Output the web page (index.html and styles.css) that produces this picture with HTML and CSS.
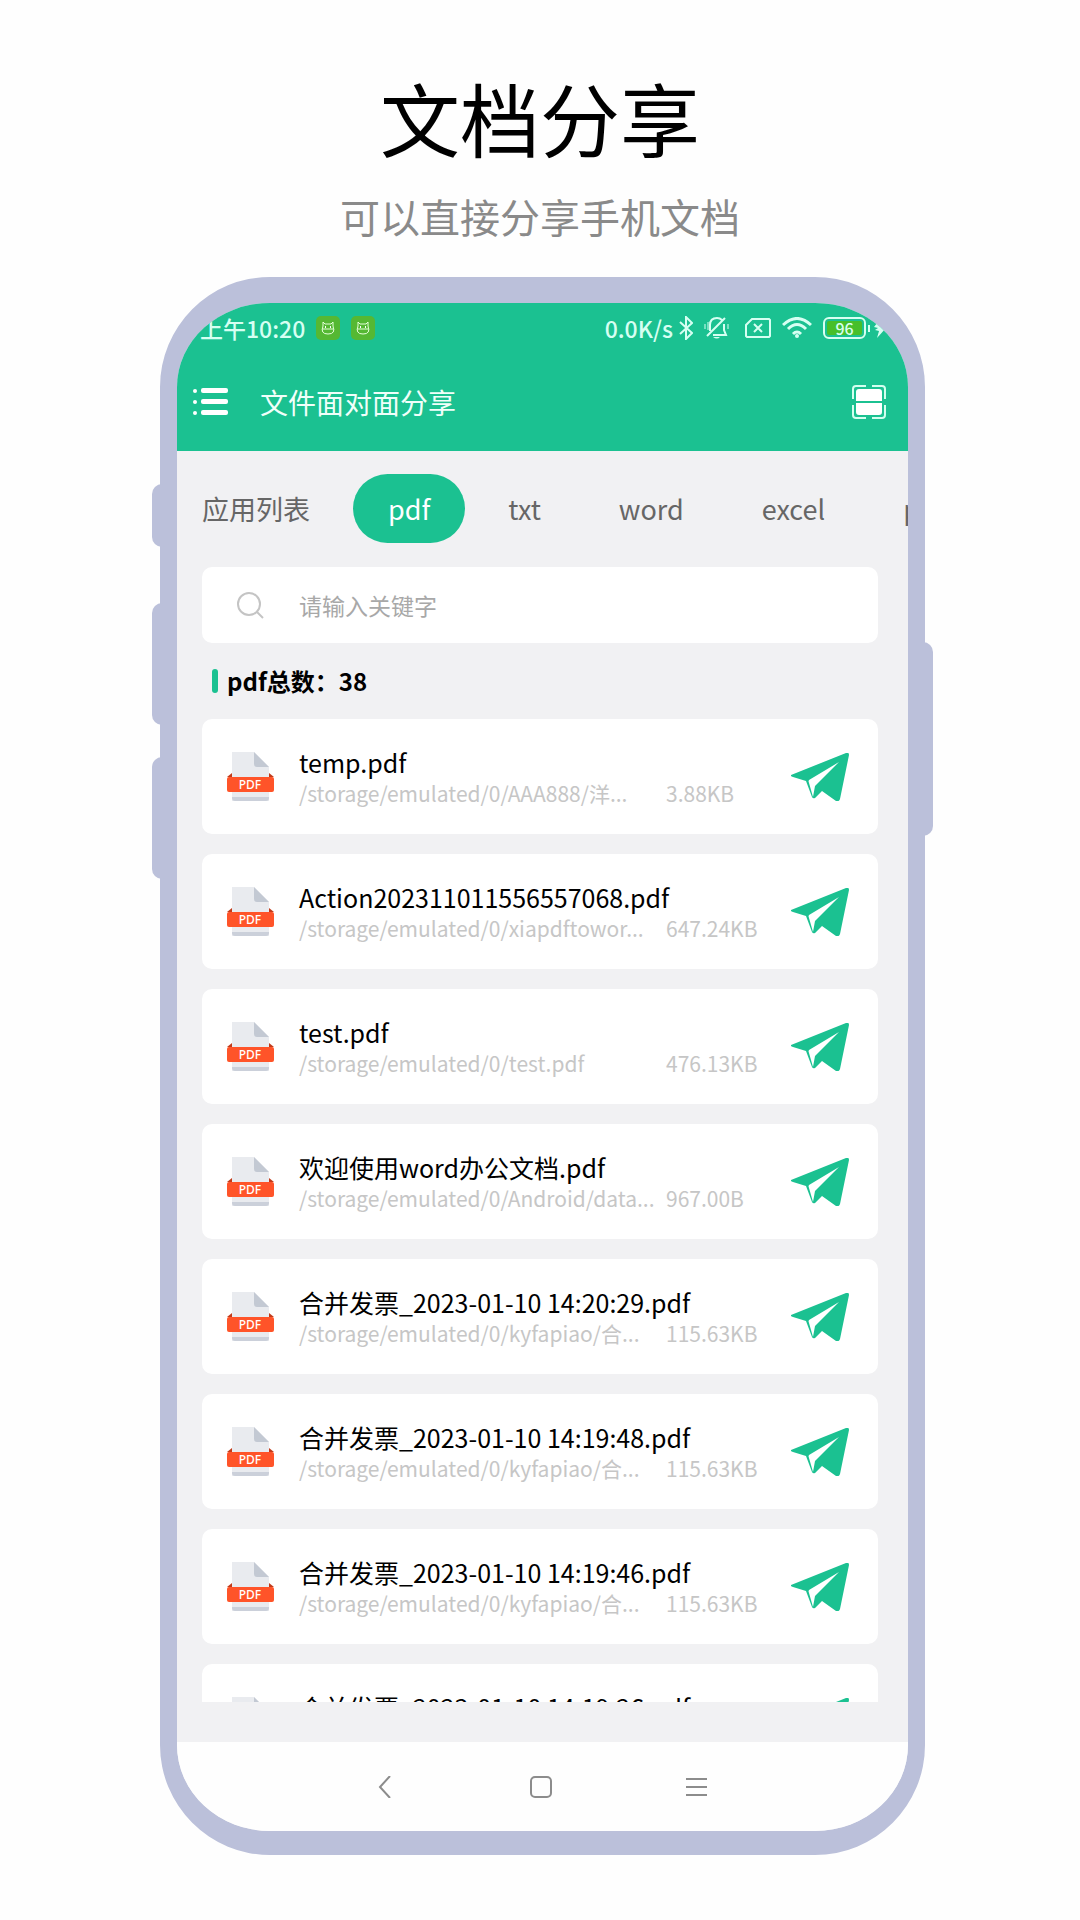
FILE: index.html
```html
<!DOCTYPE html>
<html lang="zh-CN">

<head>
    <meta charset="UTF-8">
    <meta name="viewport" content="width=device-width, initial-scale=1.0">
    <title>文档分享</title>
    <link rel="stylesheet" href="styles.css">
</head>

<body>
    <!-- shared icons -->
    <svg class="sprite" aria-hidden="true">
        <symbol id="pdf" viewBox="0 0 47 49">
            <path d="M5 0h22l15 15v34H5z" fill="#e9ebef" />
            <path d="M27 0l15 15H30q-3 0-3-3z" fill="#c3c9d3" />
            <path d="M5 40h37v6q0 3-3 3H8q-3 0-3-3z" fill="#e9ebef" />
            <path d="M5 45h37v1q0 3-3 3H8q-3 0-3-3z" fill="#cbd0da" />
            <path d="M0 25l5-4v4zM47 25l-5-4v4z" fill="#c23b1a" />
            <rect y="25" width="47" height="15" rx="2" fill="#ff5429" />
            <text class="pdf-text" x="23" y="37" text-anchor="middle">PDF</text>
        </symbol>
        <symbol id="plane" viewBox="0 0 58 48">
            <path d="M0 22L55 0q3-1 3 2l-9 44q-1 3-4 2L31 38l-7 7q-2 1-3-1L15 28 2 24q-3-1-2-2z" fill="#1bc191" />
            <path d="M48 9L18 27q-1 1 0 3l4 14 2-11z" fill="#fff" />
        </symbol>
        <symbol id="cat" viewBox="0 0 24 24">
            <rect width="24" height="24" rx="5" fill="#55b833" />
            <g fill="none" stroke="#e4ffd9" stroke-width="1">
                <path d="M7 10V6l2 2h6l2-2v4q3 8-5 8t-5-8z" />
                <path d="M6 13h12" />
            </g>
            <path d="M9 10h1v2H9zM14 10h1v2h-1z" fill="#fff" />
        </symbol>
    </svg>

    <header class="intro">
        <h1>文档分享</h1>
        <p>可以直接分享手机文档</p>
    </header>

    <main class="phone">
        <span class="key key-mute"></span>
        <span class="key key-up"></span>
        <span class="key key-down"></span>
        <span class="key key-power"></span>

        <div class="screen">
            <div class="status">
                <span>上午10:20</span>
                <svg class="app-icon" width="24" height="24"><use href="#cat" /></svg>
                <svg class="app-icon" width="24" height="24"><use href="#cat" /></svg>
                <div class="status-right">
                    <span>0.0K/s</span>
                    <svg width="14" height="24" viewBox="0 0 14 24" fill="none" stroke="currentColor" stroke-width="2">
                        <path d="M1 6l12 11-6 6V1l6 6L1 18" />
                    </svg>
                    <svg class="bell" width="25" height="24" viewBox="0 0 25 24" fill="none" stroke="currentColor" stroke-width="2">
                        <path d="M6 15V9q0-7 7-7 3 0 5 2M20 8v6l2 5H9M3 20L21 2" />
                        <path d="M1 8v5M4 6v8M24 8v5" stroke-width="1" />
                        <path d="M9 21h7q-3 3-7 0z" fill="currentColor" stroke="none" />
                    </svg>
                    <svg class="sim" width="26" height="20" viewBox="0 0 26 20" fill="none" stroke="currentColor" stroke-width="2">
                        <path d="M7 1h17l1 1v16l-1 1H2l-1-1V7z" />
                        <path d="M9 6l8 8M17 6l-8 8" />
                    </svg>
                    <svg class="wifi" width="30" height="22" viewBox="0 0 30 22" fill="none" stroke="currentColor" stroke-width="3">
                        <path d="M1 8q14-13 28 0M6 12q9-9 18 0M11 17q4-4 8 0" />
                        <circle cx="15" cy="19" r="2" fill="currentColor" stroke="none" />
                    </svg>
                    <span class="battery">96</span>
                    <svg width="12" height="20" viewBox="0 0 12 20" fill="currentColor">
                        <path d="M7 0L0 9l4 1-3 2 4 1-2 7 9-10-4-1 3-3-4-1z" />
                    </svg>
                </div>
            </div>

            <div class="topbar">
                <button aria-label="菜单">
                    <svg width="35" height="28" viewBox="0 0 35 28" fill="#fff">
                        <circle cx="2" cy="3" r="2" />
                        <circle cx="2" cy="14" r="2" />
                        <circle cx="2" cy="25" r="2" />
                        <rect x="8" y="0" width="27" height="5" rx="2" />
                        <rect x="8" y="11" width="27" height="5" rx="2" />
                        <rect x="8" y="22" width="27" height="5" rx="2" />
                    </svg>
                </button>
                <h2>文件面对面分享</h2>
                <button aria-label="扫一扫">
                    <svg width="34" height="34" viewBox="0 0 34 34">
                        <path d="M14 1H4Q1 1 1 4v10M20 1h10q3 0 3 3v10M1 20v10q0 3 3 3h10M33 20v10q0 3-3 3H20" fill="none" stroke="#d3fff0" stroke-width="2" />
                        <path d="M7 4h20q3 0 3 3v9H4V7q0-3 3-3zM4 18h26v9q0 3-3 3H7q-3 0-3-3z" fill="#fff" />
                    </svg>
                </button>
            </div>

            <nav class="tabs">
                <a href="#">应用列表</a>
                <a href="#" class="active">pdf</a>
                <a href="#">txt</a>
                <a href="#">word</a>
                <a href="#">excel</a>
                <a href="#">ppt</a>
            </nav>

            <div class="content">
                <label class="search">
                    <svg width="27" height="27" viewBox="0 0 27 27" fill="none" stroke="#c4c4c4" stroke-width="2">
                        <circle cx="12" cy="12" r="11" />
                        <path d="M20 20l6 6" />
                    </svg>
                    <input type="text" placeholder="请输入关键字" aria-label="请输入关键字">
                </label>

                <h3 class="total">pdf总数：38</h3>

                <ul class="files">
                    <li class="file">
                        <svg width="47" height="49"><use href="#pdf" /></svg>
                        <div class="info">
                            <p class="name">temp.pdf</p>
                            <p class="meta"><span class="path">/storage/emulated/0/AAA888/洋...</span><span>3.88KB</span></p>
                        </div>
                        <button aria-label="分享"><svg width="58" height="48"><use href="#plane" /></svg></button>
                    </li>
                    <li class="file">
                        <svg width="47" height="49"><use href="#pdf" /></svg>
                        <div class="info">
                            <p class="name">Action202311011556557068.pdf</p>
                            <p class="meta"><span class="path">/storage/emulated/0/xiapdftowor...</span><span>647.24KB</span></p>
                        </div>
                        <button aria-label="分享"><svg width="58" height="48"><use href="#plane" /></svg></button>
                    </li>
                    <li class="file">
                        <svg width="47" height="49"><use href="#pdf" /></svg>
                        <div class="info">
                            <p class="name">test.pdf</p>
                            <p class="meta"><span class="path">/storage/emulated/0/test.pdf</span><span>476.13KB</span></p>
                        </div>
                        <button aria-label="分享"><svg width="58" height="48"><use href="#plane" /></svg></button>
                    </li>
                    <li class="file">
                        <svg width="47" height="49"><use href="#pdf" /></svg>
                        <div class="info">
                            <p class="name">欢迎使用word办公文档.pdf</p>
                            <p class="meta"><span class="path">/storage/emulated/0/Android/data...</span><span>967.00B</span></p>
                        </div>
                        <button aria-label="分享"><svg width="58" height="48"><use href="#plane" /></svg></button>
                    </li>
                    <li class="file">
                        <svg width="47" height="49"><use href="#pdf" /></svg>
                        <div class="info">
                            <p class="name">合并发票_2023-01-10 14:20:29.pdf</p>
                            <p class="meta"><span class="path">/storage/emulated/0/kyfapiao/合...</span><span>115.63KB</span></p>
                        </div>
                        <button aria-label="分享"><svg width="58" height="48"><use href="#plane" /></svg></button>
                    </li>
                    <li class="file">
                        <svg width="47" height="49"><use href="#pdf" /></svg>
                        <div class="info">
                            <p class="name">合并发票_2023-01-10 14:19:48.pdf</p>
                            <p class="meta"><span class="path">/storage/emulated/0/kyfapiao/合...</span><span>115.63KB</span></p>
                        </div>
                        <button aria-label="分享"><svg width="58" height="48"><use href="#plane" /></svg></button>
                    </li>
                    <li class="file">
                        <svg width="47" height="49"><use href="#pdf" /></svg>
                        <div class="info">
                            <p class="name">合并发票_2023-01-10 14:19:46.pdf</p>
                            <p class="meta"><span class="path">/storage/emulated/0/kyfapiao/合...</span><span>115.63KB</span></p>
                        </div>
                        <button aria-label="分享"><svg width="58" height="48"><use href="#plane" /></svg></button>
                    </li>
                    <li class="file">
                        <svg width="47" height="49"><use href="#pdf" /></svg>
                        <div class="info">
                            <p class="name">合并发票_2023-01-10 14:19:26.pdf</p>
                            <p class="meta"><span class="path">/storage/emulated/0/kyfapiao/合...</span><span>115.63KB</span></p>
                        </div>
                        <button aria-label="分享"><svg width="58" height="48"><use href="#plane" /></svg></button>
                    </li>
                </ul>
            </div>

            <div class="navbar">
                <button aria-label="返回">
                    <svg width="22" height="22" viewBox="0 0 22 22"><path d="M16 0L6 11l10 11" /></svg>
                </button>
                <button aria-label="主页">
                    <svg width="22" height="22" viewBox="0 0 22 22"><rect x="1" y="1" width="20" height="20" rx="4" /></svg>
                </button>
                <button aria-label="最近任务">
                    <svg width="22" height="22" viewBox="0 0 22 22"><path d="M0 3h21M0 11h21M0 19h21" /></svg>
                </button>
            </div>
        </div>
    </main>
</body>

</html>
```
FILE: styles.css
```css
* {
    box-sizing: border-box;
    margin: 0;
    padding: 0;
}

body {
    display: flex;
    flex-direction: column;
    height: 100vh;
    padding: 68px 155px 65px 160px;
    background: #fefefe;
    font-family: "Noto Sans CJK SC", "Noto Sans", sans-serif;
}

svg {
    display: block;
    flex-shrink: 0;
}

button {
    border: none;
    background: none;
    cursor: pointer;
}

.sprite {
    display: none;
}

.intro {
    margin: 0 -155px 31px -160px;
    text-align: center;
}

.intro h1 {
    font-size: 80px;
    font-weight: 400;
    line-height: 96px;
    color: #000;
}

.intro p {
    margin-top: 22px;
    font-size: 40px;
    line-height: 60px;
    color: #8a8a8a;
}

/* phone body */
.phone {
    position: relative;
    display: flex;
    flex: 1;
    min-height: 0;
}

.screen {
    display: flex;
    flex: 1;
    flex-direction: column;
    min-width: 0;
    border: solid #bbc0da;
    border-width: 26px 17px 24px;
    border-radius: 110px;
    background: #f1f1f3;
    overflow: hidden;
}

.key {
    position: absolute;
    left: -8px;
    width: 20px;
    border-radius: 10px;
    background: #bbc0da;
}

.key-mute {
    top: 207px;
    height: 63px;
}

.key-up {
    top: 326px;
    height: 122px;
}

.key-down {
    top: 480px;
    height: 122px;
}

.key-power {
    top: 365px;
    left: auto;
    right: -8px;
    height: 194px;
}

/* green header */
.status {
    display: flex;
    align-items: center;
    height: 50px;
    padding: 0 22px 0 23px;
    background: #1bc191;
    color: #d6fff2;
    font-size: 23px;
    font-weight: 500;
    line-height: 30px;
}

.app-icon {
    margin-left: 11px;
}

.status-right {
    display: flex;
    align-items: center;
    margin-left: auto;
}

.status-right svg {
    margin-left: 6px;
}

.status-right .bell,
.status-right .wifi {
    margin-left: 11px;
}

.status-right .sim {
    margin-left: 16px;
}

.battery {
    position: relative;
    width: 43px;
    height: 22px;
    margin-left: 11px;
    margin-right: 2px;
    border: 2px solid #d6fff2;
    border-radius: 6px;
    background: #47bf2a;
    box-shadow: inset 0 0 0 2px #1bc191;
    font-size: 16px;
    line-height: 18px;
    text-align: center;
}

.battery::after {
    content: "";
    position: absolute;
    top: 6px;
    right: -6px;
    width: 2px;
    height: 7px;
    background: #d6fff2;
}

.topbar {
    display: flex;
    align-items: center;
    height: 98px;
    padding: 0 22px 0 16px;
    background: #1bc191;
}

.topbar h2 {
    flex: 1;
    margin-left: 32px;
    font-size: 28px;
    font-weight: 400;
    line-height: 40px;
    color: #f0fffa;
}

.tabs {
    display: flex;
    gap: 8px;
    padding: 23px 0 24px 25px;
    overflow: hidden;
}

.tabs a {
    flex-shrink: 0;
    padding: 0 35px;
    border-radius: 35px;
    font-size: 27px;
    line-height: 69px;
    color: #666;
    text-decoration: none;
}

.tabs a:first-child {
    padding-left: 0;
}

.tabs .active {
    background: #1bc191;
    color: #fff;
}

.content {
    display: flex;
    flex: 1;
    flex-direction: column;
    min-height: 0;
    padding: 0 30px 40px 25px;
}

.search {
    display: flex;
    align-items: center;
    height: 76px;
    flex-shrink: 0;
    padding: 0 35px;
    border-radius: 10px;
    background: #fff;
}

.search input {
    flex: 1;
    min-width: 0;
    margin-left: 35px;
    border: none;
    outline: none;
    background: none;
    font-family: inherit;
    font-size: 23px;
    line-height: 34px;
}

.search input::placeholder {
    color: #a8a8a8;
}

.total {
    display: flex;
    align-items: center;
    margin: 20px 10px;
    font-size: 24px;
    font-weight: 700;
    line-height: 36px;
    color: #000;
}

.total::before {
    content: "";
    width: 6px;
    height: 24px;
    margin-right: 9px;
    border-radius: 3px;
    background: #1bc191;
}

.files {
    display: flex;
    flex: 1;
    flex-direction: column;
    gap: 20px;
    min-height: 0;
    list-style: none;
    overflow: hidden;
}

.file {
    display: flex;
    align-items: center;
    flex-shrink: 0;
    height: 115px;
    padding: 0 29px 0 25px;
    border-radius: 10px;
    background: #fff;
}

.info {
    flex: 1;
    min-width: 0;
    margin-left: 25px;
}

.name {
    font-size: 25px;
    line-height: 32px;
    color: #000;
}

.meta {
    display: flex;
    font-size: 21px;
    line-height: 30px;
    color: #c6c6c6;
    white-space: nowrap;
}

.path {
    width: 367px;
}

.pdf-text {
    font-family: "Noto Sans", sans-serif;
    font-size: 12px;
    font-weight: 500;
    fill: #fff;
}

/* system buttons */
.navbar {
    display: flex;
    align-items: center;
    justify-content: center;
    gap: 116px;
    height: 89px;
    padding-right: 4px;
    background: #fefefe;
}

.navbar button {
    display: flex;
    justify-content: center;
    width: 40px;
}

.navbar svg {
    fill: none;
    stroke: #8c8c8c;
    stroke-width: 2;
}
```
